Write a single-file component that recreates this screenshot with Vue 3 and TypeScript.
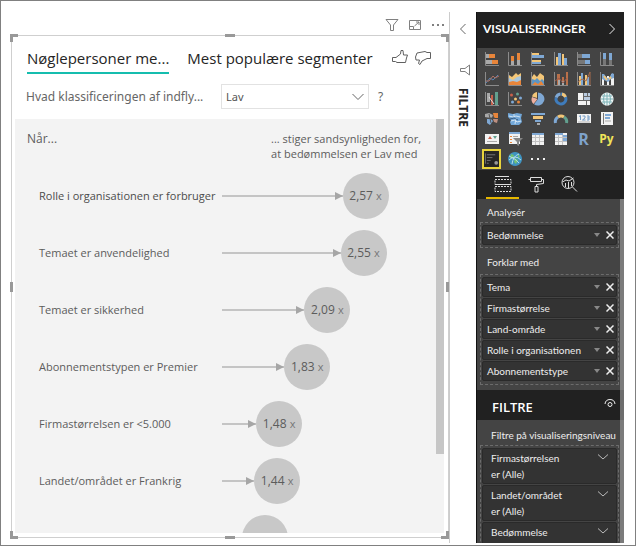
<script setup lang="ts">
import { ref } from 'vue'

type Shape = { d: string; f?: string; s?: string; w?: number }
interface VisualType { name: string; shapes?: Shape[]; text?: string; tone?: string; active?: boolean }
interface Influencer { label: string; value: string; reach: number; strong?: boolean }
interface Filter { name: string; state?: string }

const OR = '#e8853a', BL = '#7fa8d4', DB = '#3f7cbc', YE = '#f3c678', GR = '#a9a9a9', DG = '#777777', WH = '#f2f2f2', TE = '#62a08f', RD = '#c9604a'
const axis: Shape = { d: 'M1.5 1V14.5H15', s: '#8b8b8b', w: 1 }

const visuals: VisualType[] = [
  { name: 'Stablet liggende søjlediagram', shapes: [axis, { d: 'M2 3h3v4h-3zM2 9h6v4h-6z', f: GR }, { d: 'M5 3h6v4h-6zM8 9h6v4h-6z', f: OR }] },
  { name: 'Stablet søjlediagram', shapes: [axis, { d: 'M4 10h3v4h-3zM10 9h3v5h-3z', f: GR }, { d: 'M4 5h3v5h-3zM10 2h3v7h-3z', f: OR }] },
  { name: 'Grupperet liggende søjlediagram', shapes: [axis, { d: 'M2 2h7v2h-7zM2 9h9v2h-9z', f: YE }, { d: 'M2 4h12v3h-12zM2 11h9v2h-9z', f: BL }] },
  { name: 'Grupperet søjlediagram', shapes: [axis, { d: 'M3 6h2v8h-2zM9 3h2v11h-2z', f: YE }, { d: 'M5 2h3v12h-3zM11 7h3v7h-3z', f: BL }] },
  { name: '100 % stablet liggende søjlediagram', shapes: [axis, { d: 'M2 3h4v4h-4zM2 9h7v4h-7z', f: DG }, { d: 'M6 3h8v4h-8zM9 9h5v4h-5z', f: BL }] },
  { name: '100 % stablet søjlediagram', shapes: [axis, { d: 'M4 8h3v6h-3zM10 9h3v5h-3z', f: DG }, { d: 'M4 2h3v6h-3zM10 2h3v7h-3z', f: BL }] },

  { name: 'Kurvediagram', shapes: [axis, { d: 'M2 12L6 7L9 9L14 4', s: '#5684b8', w: 1 }, { d: 'M2 10L5 10L9 5L11 7L15 5', s: '#b07264', w: 1 }] },
  { name: 'Områdediagram', shapes: [axis, { d: 'M2 4L5 6L9 2L11 4L14 2V14H2z', f: YE }, { d: 'M2 7L6 9L10 6L14 5V14H2z', f: '#a9c6dc' }, { d: 'M2 11L6 10L10 11L14 9V14H2z', f: OR }] },
  { name: 'Stablet områdediagram', shapes: [axis, { d: 'M2 6L4 3L7 6L10 2L14 5V14H2z', f: YE }, { d: 'M2 8L5 9L7 7L10 10L12 8L14 10V14H2z', f: '#5d95c4' }, { d: 'M2 14L5 11L8 13L11 10L14 14z', f: OR }] },
  { name: 'Kurve- og stablet søjlediagram', shapes: [axis, { d: 'M4 3h3v11h-3zM9 6h2v8h-2zM13 1h2v13h-2z', f: '#b9704a' }, { d: 'M5 9h2v5h-2zM9 10h2v4h-2z', f: GR }, { d: 'M2 10L6 7L10 12L14 7', s: '#a15a48', w: 1 }] },
  { name: 'Kurve- og grupperet søjlediagram', shapes: [axis, { d: 'M3 5h2v9h-2zM9 4h2v10h-2z', f: YE }, { d: 'M5 2h2v12h-2zM11 6h2v8h-2z', f: BL }, { d: 'M2 11L6 8L10 10L14 1V14', s: '#a46b4d', w: 1 }] },
  { name: 'Bånddiagram', shapes: [axis, { d: 'M3 3h2v11h-2zM8 5h2v9h-2zM12 3h3v11h-3z', f: WH }, { d: 'M3 3L5 3L8 7L10 7L13 2L15 3V7L12 8L9 11L3 8z', f: BL }, { d: 'M5 5L8 9M10 8L12 6', s: YE, w: 2 }] },

  { name: 'Vandfaldsdiagram', shapes: [axis, { d: 'M3 2h3v9h-3z', f: GR }, { d: 'M7 4h2v10h-2z', f: RD }, { d: 'M11 1h3v13h-3z', f: TE }, { d: 'M5 6L10 13', s: '#ddd', w: 1 }] },
  { name: 'Punktdiagram', shapes: [axis, { d: 'M3 4a1.5 1.5 0 1 0 3 0a1.5 1.5 0 1 0-3 0', f: RD }, { d: 'M9 3a1.5 1.5 0 1 0 3 0a1.5 1.5 0 1 0-3 0', f: TE }, { d: 'M7 8a1.5 1.5 0 1 0 3 0a1.5 1.5 0 1 0-3 0', f: YE }, { d: 'M4 11a1.5 1.5 0 1 0 3 0a1.5 1.5 0 1 0-3 0M12 7a1.5 1.5 0 1 0 3 0a1.5 1.5 0 1 0-3 0', f: BL }, { d: 'M10 11a1.5 1.5 0 1 0 3 0a1.5 1.5 0 1 0-3 0', f: OR }] },
  { name: 'Cirkeldiagram', shapes: [{ d: 'M8 8V1.5A6.5 6.5 0 1 1 4 13.2z', f: BL }, { d: 'M7.5 8L3.5 13A6.5 6.5 0 0 1 2 6z', f: '#efb0a0' }, { d: 'M7 7L2 5.5A6.5 6.5 0 0 1 7 1z', f: YE }] },
  { name: 'Kransediagram', shapes: [{ d: 'M8 3A5 5 0 1 1 3.2 6.5', s: DB, w: 3 }, { d: 'M3.2 6.5A5 5 0 0 1 7.5 3', s: BL, w: 3 }, { d: 'M9 3A5 5 0 0 1 12.5 6', s: YE, w: 3 }] },
  { name: 'Træstruktur', shapes: [{ d: 'M2 2h12v12h-12z', f: WH }, { d: 'M8 2h6v7h-6z', f: '#b9cbe0' }, { d: 'M2 9.5H14M7.5 2V9M8 5.5H14M10.5 10V14M11.5 2V5', s: '#666', w: 1 }] },
  { name: 'Kort', shapes: [{ d: 'M8 1.5a6.5 6.5 0 1 0 .1 0z', f: '#eef5f5' }, { d: 'M8 2V14M2 8H14M3 5H13M3 11H13M5.5 2.5Q3.5 8 5.5 13.5M10.5 2.5Q12.5 8 10.5 13.5', s: '#7db2b7', w: 1 }] },

  { name: 'Udfyldt kort', shapes: [{ d: 'M1 3L5 2L9 4L8 7L4 7L1 6z', f: GR }, { d: 'M3 8L7 8L9 10L6 14L3 12z', f: BL }, { d: 'M9 2L14 2L14 7L10 7z', f: OR }, { d: 'M9 8L14 8L13 12L10 11z', f: '#bd8f80' }, { d: 'M2 7L11 7M5 3L7 12', s: '#555', w: 1 }] },
  { name: 'Figurkort', shapes: [{ d: 'M1 2L6 3L10 2L15 3L14 7L15 11L12 14L4 14L3 11L4 9L1 6z', f: '#72a7d8' }, { d: 'M2 5L6 6L9 5L13 6M4 10L8 9L10 11L14 10M7 3L7 5M9 7L8 13', s: '#d2e4f2', w: 1 }, { d: 'M3 8L7 7L11 9', s: '#335d88', w: 1 }] },
  { name: 'Tragtdiagram', shapes: [{ d: 'M1 2h14v2h-14z', f: BL }, { d: 'M3 5h10v3h-10z', f: YE }, { d: 'M5 9h6v2h-6z', f: BL }, { d: 'M7 12h3v2h-3z', f: GR }] },
  { name: 'Måler', shapes: [{ d: 'M2.5 12A5.5 5.5 0 0 1 5 6', s: BL, w: 3 }, { d: 'M5 6A5.5 5.5 0 0 1 11 6', s: YE, w: 3 }, { d: 'M11 6A5.5 5.5 0 0 1 13.5 12', s: TE, w: 3 }] },
  { name: 'Kort med tal', shapes: [{ d: 'M1 3h14v9h-14z', f: WH }, { d: 'M3 5.5L4.5 4.5V9M6.5 5H9V7L6.5 9H9.5M11 5H13V9H11M11 7H13', s: '#729bc5', w: 1 }, { d: 'M2 11H14', s: '#b9b9b9', w: 1 }] },
  { name: 'Kort med flere rækker', shapes: [{ d: 'M2 1h12v13h-12z', f: WH }, { d: 'M4.5 2V13', s: DG, w: 1 }, { d: 'M6 4H12M6 7H11', s: BL, w: 2 }, { d: 'M6 10H12', s: GR, w: 1 }] },

  { name: 'KPI', shapes: [{ d: 'M1 3h14v10h-14z', f: WH }, { d: 'M4 8L6 5L8 8z', f: RD }, { d: 'M9 5H13L11 8z', f: TE }, { d: 'M3 10.5H13', s: GR, w: 1 }] },
  { name: 'Udsnit', shapes: [{ d: 'M2 1h11v12h-11z', f: WH }, { d: 'M2 1h11v2h-11z', f: BL }, { d: 'M3 5.5H5M3 8.5H5M3 11.5H5', s: OR, w: 1 }, { d: 'M6 5.5H11', s: GR, w: 1 }, { d: 'M6 7H16L12 11V15L10 14V11z', f: '#858585' }] },
  { name: 'Tabel', shapes: [{ d: 'M2 2h12v12h-12z', f: WH }, { d: 'M2 2h12v2h-12z', f: BL }, { d: 'M2 6.5H14M2 10.5H14M5.5 4V14M9.5 4V14', s: '#c2c2c2', w: 1 }] },
  { name: 'Matrix', shapes: [{ d: 'M2 2h12v12h-12z', f: WH }, { d: 'M2 2h8v2h-8zM10 4h4v7h-4z', f: BL }, { d: 'M2 6.5H14M2 10.5H14M5.5 4V14M9.5 4V14', s: '#c2c2c2', w: 1 }] },
  { name: 'R-script', text: 'R', tone: 'blue' },
  { name: 'Python-script', text: 'Py', tone: 'yellow' },

  { name: 'Nøglepersoner', active: true, shapes: [{ d: 'M1.5 2V13M3 3.5H12M3 6.5H9M3 9.5H7M3 12.5H5', s: '#777', w: 1 }, { d: 'M11 12a2 2 0 1 0 4 0a2 2 0 1 0-4 0', f: '#999' }] },
  { name: 'ArcGIS-kort', shapes: [{ d: 'M8 1a7 7 0 1 0 .1 0z', f: '#3f93c0' }, { d: 'M4 3L7 4L6 7L3 7zM8 7L11 9L9 13L7 11zM11 3L13 6L11 7z', f: '#72c270' }, { d: 'M2 9Q8 3 14 9M5 13Q6 5 12 3M2 5Q9 8 12 12', s: '#b5e0e8', w: 1 }] },
  { name: 'Flere visualiseringer', shapes: [{ d: 'M1 7h2v2h-2zM7 7h2v2h-2zM13 7h2v2h-2z', f: WH }] },
]

const influencers: Influencer[] = [
  { label: 'Rolle i organisationen er forbruger', value: '2,57', reach: 120, strong: true },
  { label: 'Temaet er anvendelighed', value: '2,55', reach: 118 },
  { label: 'Temaet er sikkerhed', value: '2,09', reach: 82 },
  { label: 'Abonnementstypen er Premier', value: '1,83', reach: 62 },
  { label: 'Firmastørrelsen er <5.000', value: '1,48', reach: 34 },
  { label: 'Landet/området er Frankrig', value: '1,44', reach: 32 },
  { label: '', value: '', reach: 20 },
]
const trackSpan = 213

const explainBy = ['Tema', 'Firmastørrelse', 'Land-område', 'Rolle i organisationen', 'Abonnementstype']
const filters: Filter[] = [
  { name: 'Firmastørrelsen', state: 'er (Alle)' },
  { name: 'Landet/området', state: 'er (Alle)' },
  { name: 'Bedømmelse' },
]
const rating = ref('Lav')
</script>

<template>
  <div class="page">
    <main class="report">
      <div class="toolbar">
        <button type="button" aria-label="Filtre">
          <svg width="14" height="14" viewBox="0 0 14 14"><path d="M1 1.5H13L8.5 7V12.5H5.5V7z" /></svg>
        </button>
        <button type="button" aria-label="Fokustilstand">
          <svg width="14" height="14" viewBox="0 0 14 14"><path d="M1.5 2.5H12.5V11.5H1.5zM1.5 8.5H5.5V11.5M6.5 8L11 4M8 4H11V7" /></svg>
        </button>
        <button type="button" aria-label="Flere indstillinger">
          <svg width="14" height="14" viewBox="0 0 14 14"><path class="solid" d="M1 6h2v2h-2zM6 6h2v2h-2zM11 6h2v2h-2z" /></svg>
        </button>
      </div>

      <section class="visual">
        <i v-for="h in ['tl', 'tm', 'tr', 'ml', 'mr', 'bl', 'bm', 'br']" :key="h" class="handle" :class="h"></i>

        <div class="tabs">
          <button type="button" class="tab current">Nøglepersoner me...</button>
          <button type="button" class="tab">Mest populære segmenter</button>
          <span class="votes">
            <button type="button" aria-label="Synes godt om">
              <svg width="18" height="16" viewBox="0 0 18 16"><path d="M1.5 8.5H5L9.5 5L10 1.5H12L12.5 6H16.5L15.5 9L14.5 13.5H6L4.5 12.5H1.5z" /></svg>
            </button>
            <button type="button" aria-label="Synes ikke om">
              <svg width="18" height="16" viewBox="0 0 18 16"><path d="M16.5 9.5H13L8 12L6 15.5L4.5 14.5L5.5 11H2L1.5 8L3 4L11 2.5L13 3.500H16.5z" /></svg>
            </button>
          </span>
        </div>

        <div class="question">
          <label for="rating">Hvad klassificeringen af indfly...</label>
          <span class="picker">
            <select id="rating" v-model="rating">
              <option>Lav</option>
            </select>
            <svg width="12" height="8" viewBox="0 0 12 8"><path d="M.5 1L6 6.5L11.5 1" /></svg>
          </span>
          <button type="button" class="help">?</button>
        </div>

        <div class="chart">
          <div class="plot">
            <div class="heads">
              <span>Når...</span>
              <span class="effect">... stiger sandsynligheden for,<br />at bedømmelsen er Lav med</span>
            </div>
            <ul class="rows">
              <li v-for="(r, i) in influencers" :key="i">
                <span class="label" :class="{ strong: r.strong }">{{ r.label }}</span>
                <span class="track">
                  <span class="arrow" :style="{ width: (r.reach / trackSpan) * 100 + '%' }"></span>
                  <span class="bubble"><template v-if="r.value">{{ r.value }} <small>x</small></template></span>
                </span>
              </li>
            </ul>
          </div>
          <div class="scroll"></div>
        </div>
      </section>
    </main>

    <aside class="collapsed">
      <button type="button" aria-label="Udvid">
        <svg width="8" height="12" viewBox="0 0 8 12"><path d="M6.5 1L1.5 6L6.5 11" /></svg>
      </button>
      <svg class="funnel" width="12" height="12" viewBox="0 0 12 12"><path d="M10.5 1V11L6 7.5H1.5V4.5H6z" /></svg>
      <h2>FILTRE</h2>
    </aside>

    <aside class="pane">
      <header class="pane-head">
        <h2>VISUALISERINGER</h2>
        <button type="button" aria-label="Skjul">
          <svg width="8" height="12" viewBox="0 0 8 12"><path d="M1.5 1L6.5 6L1.5 11" /></svg>
        </button>
      </header>

      <div class="gallery">
        <button v-for="v in visuals" :key="v.name" type="button" :aria-label="v.name" :class="{ active: v.active }">
          <span v-if="v.text" class="script" :class="v.tone">{{ v.text }}</span>
          <svg v-else width="16" height="16" viewBox="0 0 16 16">
            <path v-for="(s, i) in v.shapes" :key="i" :d="s.d" :fill="s.f ?? 'none'" :stroke="s.s ?? 'none'" :stroke-width="s.w ?? 0" />
          </svg>
        </button>
      </div>

      <nav class="modes">
        <button type="button" class="on" aria-label="Felter">
          <svg width="20" height="18" viewBox="0 0 20 18">
            <path d="M2 1.5H16" /><path stroke-dasharray="2 1" d="M2 4.5H18V9.5H2zM2 11.5H18V16.5H2z" /><path d="M2 9.5H18" />
          </svg>
        </button>
        <button type="button" aria-label="Format">
          <svg width="18" height="18" viewBox="0 0 18 18"><path d="M3.5 2.5H14.5V6.5H3.5zM3.5 4.5H1.5M14.5 4.5H16.5V8.5L9.5 9.5V11M8 11.5H11V17H8z" /></svg>
        </button>
        <button type="button" aria-label="Analyse">
          <svg width="18" height="18" viewBox="0 0 18 18"><path d="M14 7.5A6 6 0 1 1 2 7.5A6 6 0 1 1 14 7.5M12.5 12L17 16.5M5.5 8V12M8.5 7V13M11.5 7V11M2.5 7L6 5L9 6L13.5 3" /></svg>
        </button>
      </nav>

      <div class="wells">
        <div class="body">
          <h3>Analysér</h3>
          <div class="well">
            <div class="field">
              <span>Bedømmelse</span>
              <button type="button" class="caret" aria-label="Menu"></button>
              <button type="button" aria-label="Fjern"><svg width="8" height="8" viewBox="0 0 8 8"><path d="M.5 .5L7.5 7.5M7.5 .5L.5 7.5" /></svg></button>
            </div>
          </div>
          <h3 class="second">Forklar med</h3>
          <div class="well tall">
            <div v-for="f in explainBy" :key="f" class="field">
              <span>{{ f }}</span>
              <button type="button" class="caret" aria-label="Menu"></button>
              <button type="button" aria-label="Fjern"><svg width="8" height="8" viewBox="0 0 8 8"><path d="M.5 .5L7.5 7.5M7.5 .5L.5 7.5" /></svg></button>
            </div>
          </div>
        </div>

        <header class="filter-head">
          <h2>FILTRE</h2>
          <svg width="12" height="10" viewBox="0 0 12 10"><path d="M1 6Q1.5 1.5 6 1.5T11 6M8 6.5A2 2 0 1 1 4 6.5A2 2 0 1 1 8 6.5" /></svg>
        </header>

        <div class="body filters">
          <h3>Filtre på visualiseringsniveau</h3>
          <div class="well">
            <button v-for="f in filters" :key="f.name" type="button" class="card">
              <span>{{ f.name }}<template v-if="f.state"><br />{{ f.state }}</template></span>
              <svg width="12" height="8" viewBox="0 0 12 8"><path d="M1 1.5L6 6L11 1.5" /></svg>
            </button>
          </div>
        </div>
        <div class="pane-scroll"></div>
      </div>
    </aside>
  </div>
</template>

<style>
body { margin: 0; background: #fff; }
</style>

<style scoped>
* { box-sizing: border-box; }
h2, h3, ul { margin: 0; padding: 0; list-style: none; font-weight: 400; }
button { display: block; margin: 0; padding: 0; border: 0; background: none; color: inherit; font: inherit; line-height: inherit; }
svg { display: block; fill: none; stroke: currentColor; }

.page {
  display: flex;
  height: 100vh;
  padding: 11px 11px 2px 10px;
  border: 1px solid #808080;
  overflow: hidden;
  font-family: "Open Sans", "Noto Sans", sans-serif;
  font-size: 11px;
  color: #5c5c5c;
}

.report { flex: 1; display: flex; flex-direction: column; min-width: 0; padding-bottom: 5px; }
.toolbar { display: flex; justify-content: flex-end; align-items: center; gap: 9px; height: 23px; padding: 3px 4px 0 0; color: #808080; }
.solid { fill: currentColor; stroke: none; }

.visual { position: relative; flex: 1; display: flex; flex-direction: column; min-height: 0; padding: 8px 4px 4px 3px; border: 1px solid #cfcfcf; }
.handle { position: absolute; width: 8px; height: 8px; border: 0 solid #999; }
.tl { top: -2px; left: -2px; border-width: 3px 0 0 3px; }
.tr { top: -2px; right: -1px; border-width: 3px 3px 0 0; }
.bl { bottom: -2px; left: -2px; border-width: 0 0 3px 3px; }
.br { bottom: -2px; right: -1px; border-width: 0 3px 3px 0; }
.tm, .bm { left: calc(50% - 5px); width: 10px; height: 3px; background: #999; }
.ml, .mr { top: calc(50% - 5px); width: 3px; height: 10px; background: #999; }
.tm { top: -2px; }
.bm { bottom: -2px; }
.ml { left: -2px; }
.mr { right: -1px; }

.tabs { display: flex; align-items: flex-start; padding: 0 11px 0 12px; color: #252525; }
.tab { height: 30px; margin-right: 18px; border-bottom: 2px solid transparent; font-size: 15px; line-height: 28px; font-weight: 500; white-space: nowrap; }
.tab.current { border-color: #15bdae; }
.votes { display: flex; gap: 5px; margin-left: auto; margin-right: 1px; padding-top: 5px; color: #606060; }
.tab + .votes { margin-left: 0; flex: 1; justify-content: flex-end; }

.question { display: flex; align-items: center; height: 25px; margin-top: 10px; padding-left: 11px; font-family: "Noto Sans", sans-serif; font-size: 12px; color: #666; }
.question label { width: 195px; white-space: nowrap; }
.picker { display: grid; align-items: center; width: 148px; }
.picker > * { grid-area: 1 / 1; }
.picker select { width: 100%; height: 25px; padding: 0 4px; border: 1px solid #e2e2e2; border-radius: 0; background: #fff; appearance: none; font: inherit; font-size: 11px; color: #555; }
.picker svg { justify-self: end; margin-right: 5px; pointer-events: none; }
.help { margin-left: 9px; }

.chart { flex: 1; display: flex; min-height: 0; margin-top: 10px; background: #f3f3f3; overflow: hidden; }
.plot { flex: 1; min-width: 0; padding: 12px 0 0 12px; }
.heads { display: flex; justify-content: space-between; height: 36px; padding-right: 15px; font-size: 12px; line-height: 16px; }
.effect { font-size: 11px; line-height: 15px; }
.rows li { display: grid; grid-template-columns: 195px 1fr; align-items: center; height: 57px; }
.label { padding-left: 12px; white-space: nowrap; }
.strong { font-weight: 500; color: #4c4c4c; }
.track { display: flex; align-items: center; }
.arrow { position: relative; flex: none; height: 2px; background: #c4c4c4; }
.arrow::after { content: ""; position: absolute; right: 0; top: -3px; border: 4px solid transparent; border-left: 8px solid #a6a6a6; border-right: 0; }
.bubble { flex: none; width: 46px; height: 46px; border-radius: 50%; background: #c8c8c8; font-size: 12px; line-height: 46px; text-align: center; white-space: nowrap; }
.bubble small { font-size: 11px; color: #777; }
.scroll { width: 8px; height: 335px; background: #c6c6c6; }

.collapsed { display: flex; flex-direction: column; align-items: center; width: 27px; padding-top: 11px; border-left: 1px solid #ccc; color: #666; }
.funnel { margin: 29px 0 12px 3px; color: #808080; }
.collapsed h2 { writing-mode: vertical-rl; font-size: 12px; line-height: 16px; font-weight: 700; color: #252525; }

.pane { display: flex; flex-direction: column; width: 148px; min-height: 0; border-left: 1px solid #111; background: #444; color: #eee; overflow: hidden; font-family: Lato, "Open Sans", sans-serif; }
.pane-head { display: flex; flex: none; align-items: center; justify-content: space-between; height: 36px; padding: 0 8px 3px 6px; background: #212121; }
.pane-head h2 { font-size: 12px; font-weight: 700; color: #fff; }
.gallery { display: grid; flex: none; grid-template-columns: repeat(6, 1fr); grid-auto-rows: 20px; padding: 1px 6px 1px 3px; }
.gallery button { display: flex; align-items: center; justify-content: center; }
.gallery .active { justify-self: center; width: 19px; height: 20px; border: 2px solid #e8d33c; background: #262626; }
.script { font-family: "Open Sans", sans-serif; line-height: 20px; font-weight: 700; }
.blue { color: #7fa3cc; font-size: 16px; }
.yellow { color: #f0e45a; font-size: 12px; }

.modes { display: flex; flex: none; height: 29px; padding-left: 9px; background: #212121; color: #ddd; }
.modes button { display: flex; align-items: center; justify-content: center; width: 33px; border-bottom: 2px solid transparent; }
.modes .on { border-color: #e6b800; }

.wells { position: relative; flex: 1; min-height: 0; overflow: hidden; font-size: 10px; }
.body { padding: 5px 5px 5px 3px; }
.body h3 { padding-left: 7px; font-size: 10px; line-height: 16px; white-space: nowrap; }
.body .second { margin-top: 6px; }
.well { display: grid; gap: 1px; margin-top: 2px; padding: 2px 1px; border: 1px dashed #6c6c6c; }
.body .tall { margin-top: 4px; padding-bottom: 3px; }
.field { display: flex; align-items: center; height: 20px; padding: 0 2px 0 4px; border: 1px solid #2a2a2a; border-radius: 2px; background: #333; white-space: nowrap; }
.field span { flex: 1; min-width: 0; }
.field svg { stroke-width: 1.5; }
.caret { margin-right: 6px; border: 3px solid transparent; border-top: 4px solid #888; border-bottom: 0; }

.filter-head { display: flex; align-items: center; justify-content: space-between; height: 30px; padding: 0 8px 0 15px; background: #212121; }
.filter-head h2 { padding-top: 4px; font-family: "Open Sans", sans-serif; font-size: 13px; font-weight: 600; color: #fff; }
.filter-head svg { margin-bottom: 4px; }
.filters { padding-top: 7px; }
.filters h3 { padding-left: 11px; }
.card { display: flex; justify-content: space-between; height: 36px; padding: 1px 7px 0 8px; border: 1px solid #2a2a2a; border-radius: 2px; background: #333; line-height: 16px; text-align: left; white-space: nowrap; }
.card svg { margin-top: 3px; color: #bbb; }
.pane-scroll { position: absolute; top: 0; right: 0; bottom: 0; width: 4px; background: rgba(160, 160, 160, .6); }
</style>
